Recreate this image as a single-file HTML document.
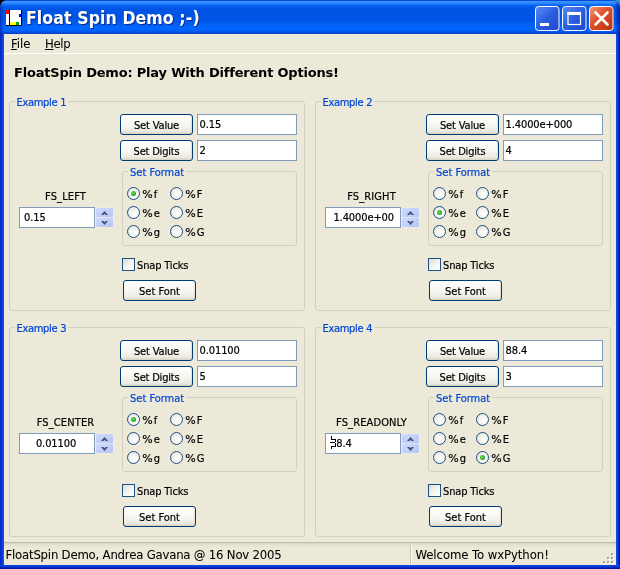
<!DOCTYPE html>
<html><head><meta charset="utf-8"><title>Float Spin Demo ;-)</title>
<style>
html,body{margin:0;padding:0}
body{width:620px;height:569px;overflow:hidden;position:relative;will-change:transform;background:#ECE9D8;font:11px "DejaVu Sans Condensed","Liberation Sans",sans-serif;color:#000;-webkit-text-stroke:.2px}
div,i,span{position:absolute;box-sizing:border-box;white-space:nowrap}
#title{left:0;top:0;width:620px;height:34px;border-radius:7px 7px 0 0;
 background:linear-gradient(to bottom,#0a48d6 0,#0a48d6 .6px,#3892ff 1.4px,#308cff 3px,#0c68f6 5px,#0059e9 7px,#0055e5 9px,#0054e3 20px,#005ef2 24px,#0066ff 27px,#0066ff 30px,#0452e2 32px,#0840cc 33.500px)}
#tedge{left:0;top:0;width:620px;height:34px;border-radius:7px 7px 0 0;background:linear-gradient(to right,rgba(0,10,140,.55) 0,rgba(0,20,160,.25) 1.5px,rgba(0,0,0,0) 4px,rgba(0,0,0,0) 615px,rgba(0,10,150,.3) 617px,rgba(0,0,130,.6) 620px)}
#corL{left:0;top:0;width:6px;height:6px;background:#000}
#corR{right:0;top:0;width:6px;height:6px;background:#2f9db8}
#ttext{left:26px;top:8px;font:bold 17.5px "DejaVu Sans Condensed","Liberation Sans",sans-serif;color:#fff;letter-spacing:.1px;text-shadow:1px 1px 0 #0a2a8c}
#bl{left:0;top:34px;width:4px;height:535px;background:linear-gradient(to right,#0826c8 0,#0a2ed2 40%,#0a44e0 65%,#0c5cf0 100%)}
#br{left:616px;top:34px;width:4px;height:535px;background:linear-gradient(to right,#0a58ec 0,#0a44dc 35%,#0628c0 65%,#00138c 100%)}
#bb{left:0;top:565px;width:620px;height:4px;background:linear-gradient(to bottom,#0a52e8 0,#0838d4 35%,#0628c0 65%,#001498 100%)}
#menu{left:4px;top:34px;width:612px;height:19px;background:#ECE9D8}
#mline{left:4px;top:53px;width:612px;height:1px;background:#fff}
.mi{font-size:13px;top:36px;-webkit-text-stroke:.05px}
#head,#ttext{-webkit-text-stroke:0}
.mi u{text-decoration:underline}
#head{left:14px;top:65px;font:bold 13px "DejaVu Sans","Liberation Sans",sans-serif;letter-spacing:-.2px}
.gb{border:1px solid #D0D0BF;border-radius:3px}
.gl{color:#0046D5;background:#ECE9D8;padding:0 2px;height:14px;line-height:14px}
.btn{width:73px;height:21px;border:1px solid #003C74;border-radius:3px;text-align:center;line-height:21px;
 background:linear-gradient(to bottom,#fff 0,#f6f5ef 55%,#ecebe2 85%,#d6d0c5 100%);box-shadow:inset -1px 0 1px rgba(214,208,197,.6)}
.tf{height:21px;border:1px solid #7F9DB9;background:#fff;line-height:20px;padding-left:1.5px;overflow:hidden;letter-spacing:-.1px}
.tf.sp{padding-left:4px;padding-right:6px;line-height:19px}
.lb{height:14px;line-height:14px}
.ctr{text-align:center}
.lb b{font-weight:normal;font-family:"DejaVu Sans","Liberation Sans",sans-serif;letter-spacing:.9px}
.rb{width:13px;height:13px;border-radius:50%;border:1px solid #1c4e7e;background:radial-gradient(circle at 65% 65%,#fff 0,#f4f3ee 50%,#dcdcd4 100%)}
.rb.on::after{content:"";position:absolute;left:3px;top:3px;width:5px;height:5px;border-radius:50%;background:radial-gradient(circle at 40% 40%,#6fdc5a,#21a121 70%,#1a8a1a)}
.cb{width:13px;height:13px;border:1px solid #1C5180;background:linear-gradient(135deg,#dcdcd5 0,#f3f3ef 50%,#fff 100%)}
.spin{width:17px;height:19px}
.spin>svg{position:absolute;left:-1px;top:-1px}
#status{left:4px;top:542px;width:612px;height:23px;background:linear-gradient(to bottom,#a8a698 0,#d6d3c4 1px,#e6e3d3 3px,#ECE9D8 6px);font-size:13px;-webkit-text-stroke:.05px}
#status .st{top:5px;line-height:16px;height:16px}
#sdiv{left:406px;top:3px;width:2px;height:19px;border-left:1px solid #c5c2b2;border-right:1px solid #fff}
</style></head>
<body>
<div id="corL"></div><div id="corR"></div><div id="title"></div><div id="tedge"></div>
<svg style="position:absolute;left:6px;top:10px" width="16" height="16" viewBox="0 0 16 16"><rect width="16" height="16" fill="#fff"/><rect x="0" y="0" width="3" height="4" fill="#f00"/><rect x="3" y="0" width="1" height="16" fill="#000"/><rect x="0" y="15" width="16" height="1" fill="#000"/><rect x="13" y="4" width="2" height="3" fill="#00f"/><rect x="4" y="12" width="6" height="3" fill="#ff0"/><rect x="10" y="12" width="3" height="3" fill="#0a0"/><rect x="15" y="0" width="1" height="16" fill="#000"/></svg>
<div id="ttext">Float Spin Demo ;-)</div>
<svg style="position:absolute;left:534px;top:5px" width="82" height="27" viewBox="0 0 82 27">
<defs>
<linearGradient id="gb" x1="0" y1="0" x2="1" y2="1"><stop offset="0" stop-color="#5a8cf5"/><stop offset=".5" stop-color="#2a5ee0"/><stop offset="1" stop-color="#1f48c8"/></linearGradient>
<linearGradient id="gr" x1="0" y1="0" x2="1" y2="1"><stop offset="0" stop-color="#f0a080"/><stop offset=".4" stop-color="#e0522c"/><stop offset="1" stop-color="#b8320e"/></linearGradient>
</defs>
<rect x="1.5" y="1.5" width="23.5" height="24" rx="3" fill="url(#gb)" stroke="#fff" stroke-width="1"/>
<rect x="28.5" y="1.5" width="23.5" height="24" rx="3" fill="url(#gb)" stroke="#fff" stroke-width="1"/>
<rect x="55.5" y="1.5" width="23.5" height="24" rx="3" fill="url(#gr)" stroke="#fff" stroke-width="1"/>
<rect x="6" y="18" width="9" height="3" fill="#fff"/>
<rect x="34" y="7.5" width="12.5" height="12" fill="none" stroke="#fff" stroke-width="1.2"/><rect x="33.5" y="7" width="13.5" height="3" fill="#fff"/>
<path d="M61.5 7.5 L73.5 19.5 M73.5 7.5 L61.5 19.5" stroke="#fff" stroke-width="2.6" stroke-linecap="round"/>
</svg>
<div id="bl"></div><div id="br"></div><div id="bb"></div>
<div id="menu"></div><div id="mline"></div>
<div class="mi" style="left:11px"><u>F</u>ile</div><div class="mi" style="left:45px;letter-spacing:-.35px"><u>H</u>elp</div>
<div id="head">FloatSpin Demo: Play With Different Options!</div>
<div class="gb" style="left:9px;top:101px;width:296px;height:210px"></div>
<div class="gl" style="left:14.5px;top:96px;letter-spacing:-.3px">Example 1</div>
<div class="btn" style="left:120px;top:114px;letter-spacing:-.15px">Set Value</div>
<div class="btn" style="left:120px;top:140px;letter-spacing:-.2px">Set Digits</div>
<div class="tf" style="left:197px;top:114px;width:100px">0.15</div>
<div class="tf" style="left:197px;top:140px;width:100px">2</div>
<div class="gb" style="left:122px;top:171px;width:175px;height:75px"></div>
<div class="gl" style="left:128px;top:166px">Set Format</div>
<div class="rb on" style="left:127px;top:187px"></div>
<div class="lb" style="left:142.3px;top:188px"><b>%</b>f</div>
<div class="rb" style="left:170px;top:187px"></div>
<div class="lb" style="left:185.3px;top:188px"><b>%</b>F</div>
<div class="rb" style="left:127px;top:206px"></div>
<div class="lb" style="left:142.3px;top:207px"><b>%</b>e</div>
<div class="rb" style="left:170px;top:206px"></div>
<div class="lb" style="left:185.3px;top:207px"><b>%</b>E</div>
<div class="rb" style="left:127px;top:225px"></div>
<div class="lb" style="left:142.3px;top:226px"><b>%</b>g</div>
<div class="rb" style="left:170px;top:225px"></div>
<div class="lb" style="left:185.3px;top:226px"><b>%</b>G</div>
<div class="lb ctr" style="left:18.5px;top:190px;width:94px;letter-spacing:.12px">FS_LEFT</div>
<div class="tf sp" style="left:19px;top:207px;width:76px;text-align:left;">0.15</div>
<div class="spin" style="left:96px;top:208px"><svg width="19" height="21" viewBox="-1 -1 19 21"><defs><linearGradient id="sg1" x1="0" y1="0" x2="1" y2="1"><stop offset="0" stop-color="#cfdafc"/><stop offset="1" stop-color="#b6c5f4"/></linearGradient></defs><rect x="-.5" y="-.5" width="18" height="20" rx="1.5" fill="#f4f3ea"/><rect x="0" y="0" width="17" height="9.3" rx="1" fill="url(#sg1)"/><rect x="0" y="9.7" width="17" height="9.3" rx="1" fill="url(#sg1)"/><path d="M5 7 L8.500 3 L12 7 L9.600 7 L8.500 5.800 L7.400 7 Z M5 13 L8.500 17 L12 13 L9.600 13 L8.500 14.200 L7.400 13 Z" fill="#42537c"/></svg></div>
<div class="cb" style="left:122px;top:258px"></div>
<div class="lb" style="left:137px;top:259px;letter-spacing:-.15px">Snap Ticks</div>
<div class="btn" style="left:123px;top:280px">Set Font</div>
<div class="gb" style="left:315px;top:101px;width:296px;height:210px"></div>
<div class="gl" style="left:320.5px;top:96px;letter-spacing:-.3px">Example 2</div>
<div class="btn" style="left:426px;top:114px;letter-spacing:-.15px">Set Value</div>
<div class="btn" style="left:426px;top:140px;letter-spacing:-.2px">Set Digits</div>
<div class="tf" style="left:503px;top:114px;width:100px">1.4000e+000</div>
<div class="tf" style="left:503px;top:140px;width:100px">4</div>
<div class="gb" style="left:428px;top:171px;width:175px;height:75px"></div>
<div class="gl" style="left:434px;top:166px">Set Format</div>
<div class="rb" style="left:433px;top:187px"></div>
<div class="lb" style="left:448.3px;top:188px"><b>%</b>f</div>
<div class="rb" style="left:476px;top:187px"></div>
<div class="lb" style="left:491.3px;top:188px"><b>%</b>F</div>
<div class="rb on" style="left:433px;top:206px"></div>
<div class="lb" style="left:448.3px;top:207px"><b>%</b>e</div>
<div class="rb" style="left:476px;top:206px"></div>
<div class="lb" style="left:491.3px;top:207px"><b>%</b>E</div>
<div class="rb" style="left:433px;top:225px"></div>
<div class="lb" style="left:448.3px;top:226px"><b>%</b>g</div>
<div class="rb" style="left:476px;top:225px"></div>
<div class="lb" style="left:491.3px;top:226px"><b>%</b>G</div>
<div class="lb ctr" style="left:324.5px;top:190px;width:94px;letter-spacing:.12px">FS_RIGHT</div>
<div class="tf sp" style="left:325px;top:207px;width:76px;text-align:right;">1.4000e+00</div>
<div class="spin" style="left:402px;top:208px"><svg width="19" height="21" viewBox="-1 -1 19 21"><defs><linearGradient id="sg2" x1="0" y1="0" x2="1" y2="1"><stop offset="0" stop-color="#cfdafc"/><stop offset="1" stop-color="#b6c5f4"/></linearGradient></defs><rect x="-.5" y="-.5" width="18" height="20" rx="1.5" fill="#f4f3ea"/><rect x="0" y="0" width="17" height="9.3" rx="1" fill="url(#sg2)"/><rect x="0" y="9.7" width="17" height="9.3" rx="1" fill="url(#sg2)"/><path d="M5 7 L8.500 3 L12 7 L9.600 7 L8.500 5.800 L7.400 7 Z M5 13 L8.500 17 L12 13 L9.600 13 L8.500 14.200 L7.400 13 Z" fill="#42537c"/></svg></div>
<div class="cb" style="left:428px;top:258px"></div>
<div class="lb" style="left:443px;top:259px;letter-spacing:-.15px">Snap Ticks</div>
<div class="btn" style="left:429px;top:280px">Set Font</div>
<div class="gb" style="left:9px;top:327px;width:296px;height:210px"></div>
<div class="gl" style="left:14.5px;top:322px;letter-spacing:-.3px">Example 3</div>
<div class="btn" style="left:120px;top:340px;letter-spacing:-.15px">Set Value</div>
<div class="btn" style="left:120px;top:366px;letter-spacing:-.2px">Set Digits</div>
<div class="tf" style="left:197px;top:340px;width:100px">0.01100</div>
<div class="tf" style="left:197px;top:366px;width:100px">5</div>
<div class="gb" style="left:122px;top:397px;width:175px;height:75px"></div>
<div class="gl" style="left:128px;top:392px">Set Format</div>
<div class="rb on" style="left:127px;top:413px"></div>
<div class="lb" style="left:142.3px;top:414px"><b>%</b>f</div>
<div class="rb" style="left:170px;top:413px"></div>
<div class="lb" style="left:185.3px;top:414px"><b>%</b>F</div>
<div class="rb" style="left:127px;top:432px"></div>
<div class="lb" style="left:142.3px;top:433px"><b>%</b>e</div>
<div class="rb" style="left:170px;top:432px"></div>
<div class="lb" style="left:185.3px;top:433px"><b>%</b>E</div>
<div class="rb" style="left:127px;top:451px"></div>
<div class="lb" style="left:142.3px;top:452px"><b>%</b>g</div>
<div class="rb" style="left:170px;top:451px"></div>
<div class="lb" style="left:185.3px;top:452px"><b>%</b>G</div>
<div class="lb ctr" style="left:18.5px;top:416px;width:94px;letter-spacing:.12px">FS_CENTER</div>
<div class="tf sp" style="left:19px;top:433px;width:76px;text-align:center;">0.01100</div>
<div class="spin" style="left:96px;top:434px"><svg width="19" height="21" viewBox="-1 -1 19 21"><defs><linearGradient id="sg3" x1="0" y1="0" x2="1" y2="1"><stop offset="0" stop-color="#cfdafc"/><stop offset="1" stop-color="#b6c5f4"/></linearGradient></defs><rect x="-.5" y="-.5" width="18" height="20" rx="1.5" fill="#f4f3ea"/><rect x="0" y="0" width="17" height="9.3" rx="1" fill="url(#sg3)"/><rect x="0" y="9.7" width="17" height="9.3" rx="1" fill="url(#sg3)"/><path d="M5 7 L8.500 3 L12 7 L9.600 7 L8.500 5.800 L7.400 7 Z M5 13 L8.500 17 L12 13 L9.600 13 L8.500 14.200 L7.400 13 Z" fill="#42537c"/></svg></div>
<div class="cb" style="left:122px;top:484px"></div>
<div class="lb" style="left:137px;top:485px;letter-spacing:-.15px">Snap Ticks</div>
<div class="btn" style="left:123px;top:506px">Set Font</div>
<div class="gb" style="left:315px;top:327px;width:296px;height:210px"></div>
<div class="gl" style="left:320.5px;top:322px;letter-spacing:-.3px">Example 4</div>
<div class="btn" style="left:426px;top:340px;letter-spacing:-.15px">Set Value</div>
<div class="btn" style="left:426px;top:366px;letter-spacing:-.2px">Set Digits</div>
<div class="tf" style="left:503px;top:340px;width:100px">88.4</div>
<div class="tf" style="left:503px;top:366px;width:100px">3</div>
<div class="gb" style="left:428px;top:397px;width:175px;height:75px"></div>
<div class="gl" style="left:434px;top:392px">Set Format</div>
<div class="rb" style="left:433px;top:413px"></div>
<div class="lb" style="left:448.3px;top:414px"><b>%</b>f</div>
<div class="rb" style="left:476px;top:413px"></div>
<div class="lb" style="left:491.3px;top:414px"><b>%</b>F</div>
<div class="rb" style="left:433px;top:432px"></div>
<div class="lb" style="left:448.3px;top:433px"><b>%</b>e</div>
<div class="rb" style="left:476px;top:432px"></div>
<div class="lb" style="left:491.3px;top:433px"><b>%</b>E</div>
<div class="rb" style="left:433px;top:451px"></div>
<div class="lb" style="left:448.3px;top:452px"><b>%</b>g</div>
<div class="rb on" style="left:476px;top:451px"></div>
<div class="lb" style="left:491.3px;top:452px"><b>%</b>G</div>
<div class="lb ctr" style="left:324.5px;top:416px;width:94px;letter-spacing:.12px">FS_READONLY</div>
<div class="tf sp" style="left:325px;top:433px;width:76px;text-align:left;">88.4</div>
<div class="spin" style="left:402px;top:434px"><svg width="19" height="21" viewBox="-1 -1 19 21"><defs><linearGradient id="sg4" x1="0" y1="0" x2="1" y2="1"><stop offset="0" stop-color="#cfdafc"/><stop offset="1" stop-color="#b6c5f4"/></linearGradient></defs><rect x="-.5" y="-.5" width="18" height="20" rx="1.5" fill="#f4f3ea"/><rect x="0" y="0" width="17" height="9.3" rx="1" fill="url(#sg4)"/><rect x="0" y="9.7" width="17" height="9.3" rx="1" fill="url(#sg4)"/><path d="M5 7 L8.500 3 L12 7 L9.600 7 L8.500 5.800 L7.400 7 Z M5 13 L8.500 17 L12 13 L9.600 13 L8.500 14.200 L7.400 13 Z" fill="#42537c"/></svg></div>
<div class="cb" style="left:428px;top:484px"></div>
<div class="lb" style="left:443px;top:485px;letter-spacing:-.15px">Snap Ticks</div>
<div class="btn" style="left:429px;top:506px">Set Font</div>
<svg style="position:absolute;left:329px;top:435px" width="8" height="15" viewBox="0 0 8 15" shape-rendering="crispEdges"><rect x="0" y="0" width="7" height="15" fill="#fff"/><path d="M2.5 1v4M2.5 4.5h4M6.5 5v2M1 7.500h5M6.500 8v3M2.500 11.500h4M2.500 11v3" stroke="#000" stroke-width="1" fill="none"/></svg>
<div id="status"><div class="st" style="left:1.5px;letter-spacing:-.2px">FloatSpin Demo, Andrea Gavana @ 16 Nov 2005</div><div id="sdiv"></div><div class="st" style="left:411.5px;letter-spacing:-.07px">Welcome To wxPython!</div>
<svg style="position:absolute;left:598px;top:10px" width="13" height="13" viewBox="0 0 13 13"><g fill="#fff"><rect x="10" y="2" width="2" height="2"/><rect x="6" y="6" width="2" height="2"/><rect x="10" y="6" width="2" height="2"/><rect x="2" y="10" width="2" height="2"/><rect x="6" y="10" width="2" height="2"/><rect x="10" y="10" width="2" height="2"/></g><g fill="#a3a192"><rect x="9" y="1" width="2" height="2"/><rect x="5" y="5" width="2" height="2"/><rect x="9" y="5" width="2" height="2"/><rect x="1" y="9" width="2" height="2"/><rect x="5" y="9" width="2" height="2"/><rect x="9" y="9" width="2" height="2"/></g></svg>
</div>
</body></html>
